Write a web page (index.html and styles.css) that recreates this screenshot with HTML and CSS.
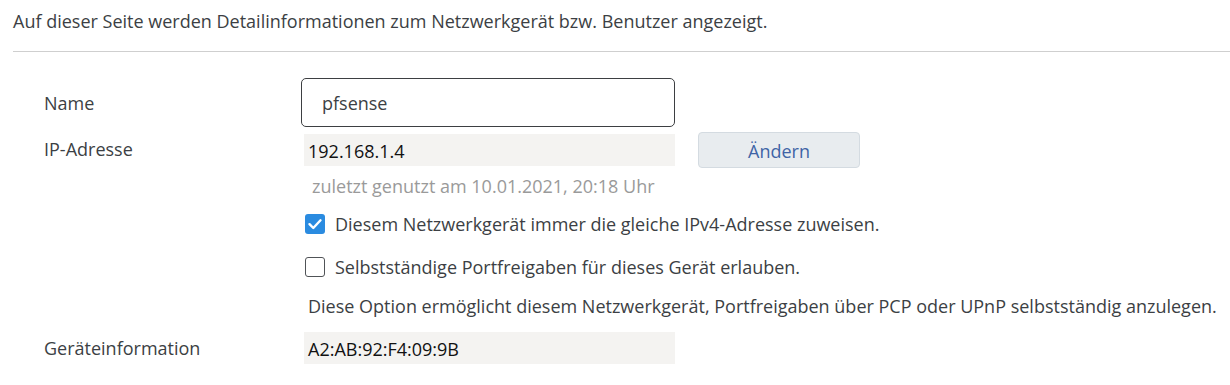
FILE: index.html
```html
<!DOCTYPE html>
<html lang="de">
<head>
<meta charset="utf-8">
<link rel="stylesheet" href="styles.css">
</head>
<body>
<p class="intro">Auf dieser Seite werden Detailinformationen zum Netzwerkgerät bzw. Benutzer angezeigt.</p>
<hr class="sep">
<div class="form">
  <div class="row row-name">
    <div class="label">Name</div>
    <div class="field"><div class="input">pfsense</div></div>
  </div>
  <div class="row row-ip">
    <div class="label">IP-Adresse</div>
    <div class="field">
      <div class="ip-line">
        <div class="readonly">192.168.1.4</div>
        <button class="btn">Ändern</button>
      </div>
      <div class="hint">zuletzt genutzt am 10.01.2021, 20:18 Uhr</div>
      <label class="check check-first">
        <span class="box checked"><svg viewBox="0 0 20 20" width="20" height="20"><path d="M4.5 10.2 L8.3 14 L15.5 6.3" fill="none" stroke="#fff" stroke-width="2.4" stroke-linecap="round" stroke-linejoin="round"/></svg></span>
        <span>Diesem Netzwerkgerät immer die gleiche IPv4-Adresse zuweisen.</span>
      </label>
      <label class="check">
        <span class="box"></span>
        <span>Selbstständige Portfreigaben für dieses Gerät erlauben.</span>
      </label>
      <div class="desc">Diese Option ermöglicht diesem Netzwerkgerät, Portfreigaben über PCP oder UPnP selbstständig anzulegen.</div>
    </div>
  </div>
  <div class="row row-info">
    <div class="label">Geräteinformation</div>
    <div class="field"><div class="readonly">A2:AB:92:F4:09:9B</div></div>
  </div>
</div>
</body>
</html>
```
FILE: styles.css
```css
* { box-sizing: border-box; }
html, body { margin: 0; padding: 0; background: #fff; }
body {
  font-family: "Open Sans", "Noto Sans", sans-serif;
  font-size: 18px;
  color: #3c3f44;
  width: 1230px;
  height: 385px;
  overflow: hidden;
}
.intro {
  margin: 0;
  padding: 8px 0 0 13px;
  line-height: 26px;
}
.sep {
  margin: 17px 0 0 13px;
  border: 0;
  border-top: 1px solid #cfcfcf;
  height: 0;
}
.form {
  padding: 26px 0 0 44px;
}
.row {
  display: grid;
  grid-template-columns: 257px 1fr;
}
.label {
  line-height: 24px;
}
.row-name .label { padding-top: 13px; }
.row-ip { margin-top: 5px; }
.row-ip .label { padding-top: 5px; }
.row-info { margin-top: 14px; }
.row-info .label { padding-top: 4px; }
.input {
  width: 374px;
  height: 49px;
  border: 1px solid #3d3f42;
  border-radius: 5px;
  padding: 12px 0 0 20px;
  line-height: 24px;
  color: #3c3f44;
}
.ip-line {
  display: flex;
  align-items: center;
  gap: 23px;
}
.readonly {
  margin-left: 3px;
  width: 371px;
  height: 32px;
  background: #f4f3f1;
  color: #111;
  padding: 5px 0 0 4px;
  line-height: 24px;
}
.btn {
  width: 162px;
  height: 36px;
  background: #e8ecef;
  border: 1px solid #d4dbe1;
  border-radius: 4px;
  color: #3f64a6;
  font: inherit;
  padding: 1px 0 0;
}
.hint {
  color: #9a9a9a;
  padding-left: 11px;
  margin-top: 5px;
  line-height: 26px;
}
.check {
  display: flex;
  align-items: center;
  gap: 10px;
  margin-left: 4px;
  line-height: 24px;
}
.check-first { margin-top: 13px; }
.check + .check { margin-top: 19px; }
.box {
  width: 20px;
  height: 20px;
  border: 1.5px solid #505357;
  border-radius: 3px;
  flex: none;
  display: block;
}
.box.checked {
  background: #2a8be0;
  border-color: #2a8be0;
  border-width: 0;
}
.box svg { display: block; }
.desc {
  margin-top: 15px;
  padding-left: 7px;
  line-height: 24px;
  white-space: nowrap;
}
```
